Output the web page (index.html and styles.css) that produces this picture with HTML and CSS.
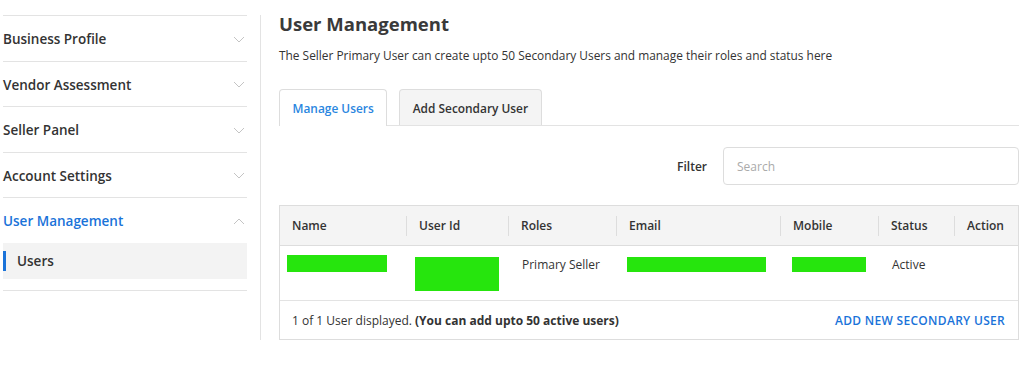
FILE: index.html
```html
<!DOCTYPE html>
<html lang="en">
<head>
    <meta charset="UTF-8">
    <title>User Management</title>
    <link rel="stylesheet" href="styles.css">
</head>
<body>
    <div class="page">
        <aside class="sidebar">
            <div class="nav-item">Business Profile <svg class="chev" viewBox="0 0 12 7"><path d="M1 1l5 5 5-5"/></svg></div>
            <div class="nav-item">Vendor Assessment <svg class="chev" viewBox="0 0 12 7"><path d="M1 1l5 5 5-5"/></svg></div>
            <div class="nav-item">Seller Panel <svg class="chev" viewBox="0 0 12 7"><path d="M1 1l5 5 5-5"/></svg></div>
            <div class="nav-item">Account Settings <svg class="chev" viewBox="0 0 12 7"><path d="M1 1l5 5 5-5"/></svg></div>
            <div class="nav-group">
                <div class="nav-item open">User Management <svg class="chev" viewBox="0 0 12 7"><path d="M1 6l5-5 5 5"/></svg></div>
                <div class="sub-item">Users</div>
            </div>
        </aside>

        <main class="main">
            <h1>User Management</h1>
            <p class="desc">The Seller Primary User can create upto 50 Secondary Users and manage their roles and status here</p>

            <div class="tabs">
                <div class="tab active">Manage Users</div>
                <div class="tab">Add Secondary User</div>
            </div>

            <div class="filter">
                <label>Filter</label>
                <input type="text" placeholder="Search">
            </div>

            <div class="grid">
                <div class="th">Name</div>
                <div class="th sep">User Id</div>
                <div class="th sep">Roles</div>
                <div class="th sep">Email</div>
                <div class="th sep">Mobile</div>
                <div class="th sep">Status</div>
                <div class="th sep">Action</div>

                <div class="td"><span class="mask m-name"></span></div>
                <div class="td"><span class="mask m-id"></span></div>
                <div class="td text">Primary Seller</div>
                <div class="td"><span class="mask m-email"></span></div>
                <div class="td"><span class="mask m-mobile"></span></div>
                <div class="td text">Active</div>
                <div class="td"></div>

                <div class="foot">
                    <span>1 of 1 User displayed. <b>(You can add upto 50 active users)</b></span>
                    <a class="add-link">ADD NEW SECONDARY USER</a>
                </div>
            </div>
        </main>
    </div>
</body>
</html>
```

FILE: styles.css
```css
body {
    margin: 0;
    font-family: "Open Sans", Arial, sans-serif;
    color: #333;
    background: #fff;
}
.page {
    display: flex;
    align-items: flex-start;
    padding-top: 15px;
}
.sidebar {
    width: 244px;
    margin-left: 3px;
    border-bottom: 1px solid #e3e3e3;
    padding-bottom: 11px;
}
.nav-item {
    height: 44.5px;
    box-sizing: content-box;
    border-top: 1px solid #e3e3e3;
    display: flex;
    align-items: center;
    justify-content: space-between;
    font-size: 13.5px;
    font-weight: 600;
    color: #333;
    padding-top: 1px;
    margin-bottom: -1px;
}
.nav-item.open {
    color: #1a73d9;
}
.chev {
    width: 12px;
    height: 7px;
    margin-right: 2px;
    fill: none;
    stroke: #c4c4c4;
    stroke-width: 1;
}
.sub-item {
    height: 36px;
    background: linear-gradient(#1a73d9, #1a73d9) left center / 3px 20px no-repeat, #f3f3f3;
    display: flex;
    align-items: center;
    padding-left: 14px;
    font-size: 13.5px;
    font-weight: 600;
}
.main {
    margin-left: 13px;
    border-left: 1px solid #e3e3e3;
    padding: 0 5px 0 18px;
    width: 740px;
    min-height: 325px;
}
h1 {
    margin: -4px 0 0;
    font-size: 18.5px;
    font-weight: 700;
    color: #3a3a3a;
    line-height: 26px;
}
.desc {
    margin: 9px 0 0;
    font-size: 11.9px;
    line-height: 18px;
}
.tabs {
    display: flex;
    gap: 12px;
    margin-top: 25px;
    border-bottom: 1px solid #e3e3e3;
}
.tab {
    height: 35px;
    padding: 0 12.5px;
    display: flex;
    align-items: center;
    font-size: 11.9px;
    font-weight: 600;
    border: 1px solid #ddd;
    border-bottom: none;
    border-radius: 4px 4px 0 0;
    background: #f4f4f4;
    color: #333;
}
.tab.active {
    background: #fff;
    color: #2a86e0;
    margin-bottom: -1px;
    height: 36px;
}
.filter {
    display: flex;
    justify-content: flex-end;
    align-items: center;
    gap: 16px;
    margin-top: 21px;
}
.filter label {
    font-size: 12px;
    font-weight: 600;
}
.filter input {
    width: 296px;
    height: 38px;
    box-sizing: border-box;
    border: 1px solid #ddd;
    border-radius: 4px;
    padding: 0 13px;
    font-family: inherit;
    font-size: 12px;
}
.filter input::placeholder {
    color: #aaa;
}
.grid {
    margin-top: 20px;
    display: grid;
    grid-template-columns: 126px 102px 108px 164px 98px 76px 1fr;
    border: 1px solid #ddd;
    font-size: 12px;
}
.th {
    height: 39px;
    background: #f4f4f4;
    display: flex;
    align-items: center;
    padding-left: 13px;
    font-weight: 600;
    border-bottom: 1px solid #ddd;
}
.th.sep {
    background: linear-gradient(#ddd, #ddd) left center / 1px 20px no-repeat, #f4f4f4;
}
.th:first-child {
    padding-left: 12px;
}
.td {
    height: 55px;
    box-sizing: border-box;
    border-bottom: 1px solid #e3e3e3;
    padding-top: 9px;
    padding-left: 9px;
}
.td.text {
    padding-left: 14px;
    padding-top: 10px;
    line-height: 18px;
}
.mask {
    display: block;
    background: #26e50d;
}
.m-name { width: 100px; height: 17px; margin-left: -2px; }
.m-id { width: 84px; height: 34px; margin-top: 2px; }
.m-email { width: 139px; height: 15px; margin-top: 2px; margin-left: 2px; }
.m-mobile { width: 74px; height: 15px; margin-top: 2px; margin-left: 3px; }
.foot {
    grid-column: 1 / -1;
    height: 38px;
    display: flex;
    align-items: center;
    justify-content: space-between;
    padding: 0 13px 0 12px;
}
.add-link {
    color: #1a73d9;
    font-weight: 600;
    letter-spacing: 0.3px;
}
```
